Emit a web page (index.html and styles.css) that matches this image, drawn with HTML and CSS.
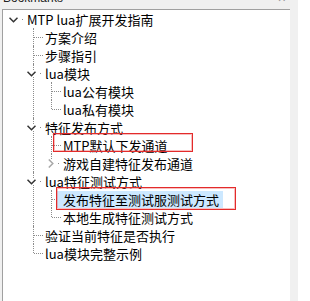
FILE: index.html
```html
<!DOCTYPE html>
<html lang="zh-CN">
<head>
    <meta charset="UTF-8">
    <title>Bookmarks</title>
    <link rel="stylesheet" href="styles.css">
</head>
<body>
    <div class="dock">
        <div class="dock-head">
            <span class="dock-title">Bookmarks</span>
            <span class="dock-close">×</span>
        </div>

        <!-- bookmark tree -->
        <div class="panel">
            <ul class="tree">
                <li class="open">
                    <div class="row"><span class="twisty"><svg width="9" height="6" viewBox="0 0 9 6"><polyline points="0.5,0.8 4.5,4.8 8.5,0.8"/></svg><i class="dot"></i></span><span class="label">MTP lua扩展开发指南</span></div>
                    <ul>
                        <li class="leaf"><div class="row"><span class="twisty"></span><span class="label">方案介绍</span></div></li>
                        <li class="leaf"><div class="row"><span class="twisty"></span><span class="label">步骤指引</span></div></li>
                        <li class="open">
                            <div class="row"><span class="twisty"><svg width="9" height="6" viewBox="0 0 9 6"><polyline points="0.5,0.8 4.5,4.8 8.5,0.8"/></svg><i class="dot"></i></span><span class="label">lua模块</span></div>
                            <ul>
                                <li class="leaf"><div class="row"><span class="twisty"></span><span class="label">lua公有模块</span></div></li>
                                <li class="leaf"><div class="row"><span class="twisty"></span><span class="label">lua私有模块</span></div></li>
                            </ul>
                        </li>
                        <li class="open">
                            <div class="row"><span class="twisty"><svg width="9" height="6" viewBox="0 0 9 6"><polyline points="0.5,0.8 4.5,4.8 8.5,0.8"/></svg><i class="dot"></i></span><span class="label">特征发布方式</span></div>
                            <ul>
                                <li class="leaf"><div class="row"><span class="twisty"></span><span class="label">MTP默认下发通道</span><span class="mark mark-a"></span></div></li>
                                <li class="closed">
                                    <div class="row"><span class="twisty"><svg class="shut" width="6" height="9" viewBox="0 0 6 9"><polyline points="0.8,0.5 4.8,4.5 0.8,8.5"/></svg><i class="dot"></i></span><span class="label">游戏自建特征发布通道</span></div>
                                </li>
                            </ul>
                        </li>
                        <li class="open">
                            <div class="row"><span class="twisty"><svg width="9" height="6" viewBox="0 0 9 6"><polyline points="0.5,0.8 4.5,4.8 8.5,0.8"/></svg><i class="dot"></i></span><span class="label">lua特征测试方式</span></div>
                            <ul>
                                <li class="leaf"><div class="row"><span class="twisty"></span><span class="label selected">发布特征至测试服测试方式</span><span class="mark mark-b"></span></div></li>
                                <li class="leaf"><div class="row"><span class="twisty"></span><span class="label">本地生成特征测试方式</span></div></li>
                            </ul>
                        </li>
                        <li class="leaf"><div class="row"><span class="twisty"></span><span class="label">验证当前特征是否执行</span></div></li>
                        <li class="leaf"><div class="row"><span class="twisty"></span><span class="label">lua模块完整示例</span></div></li>
                    </ul>
                </li>
            </ul>
        </div>
    </div>
</body>
</html>
```

FILE: styles.css
```css
body {
    margin: 0;
    background: #ffffff;
    font-family: "Noto Sans CJK SC", "Noto Sans", sans-serif;
    color: #000;
}
.dock {
    width: 298px;
    height: 301px;
    background: #f0f0f0;
    display: flex;
    flex-direction: column;
}
.dock-head {
    height: 9px;
    overflow: hidden;
    display: flex;
    justify-content: space-between;
    padding: 0 12px 0 3px;
    font-family: "Liberation Sans", sans-serif;
    font-size: 12px;
    line-height: 12px;
    color: #222;
}
.dock-title,
.dock-close {
    margin-top: -8px;
}
.dock-close {
    color: #999;
    font-size: 14px;
}
.panel {
    flex: 1;
    margin: 0 8px 0 2px;
    background: #fff;
    border-top: 1px solid #a0a0a0;
    border-left: 1px solid #a0a0a0;
}
.tree,
.tree ul {
    list-style: none;
    margin: 0;
    padding: 0;
}
.tree ul {
    padding-left: 18px;
}
.tree li {
    position: relative;
}
/* vertical guide of the parent */
.tree ul > li::before {
    content: '';
    position: absolute;
    left: 12px;
    top: 0;
    bottom: 0;
    border-left: 1px dotted #8c8c8c;
}
.tree ul > li:last-child::before {
    bottom: auto;
    height: 9px;
}
.row {
    position: relative;
    display: flex;
    align-items: center;
    height: 18px;
    font-size: 13px;
    line-height: 18px;
    white-space: nowrap;
}
.twisty {
    position: relative;
    flex: none;
    width: 24px;
    height: 18px;
}
.leaf > .row .twisty::after {
    content: '';
    position: absolute;
    left: 13px;
    top: 9px;
    width: 9px;
    border-top: 1px dotted #8c8c8c;
}
.twisty svg {
    position: absolute;
    left: 6px;
    top: 7px;
    background: #fff;
}
.twisty svg polyline {
    fill: none;
    stroke: #333;
    stroke-width: 1.5;
}
.twisty svg.shut {
    left: 9px;
    top: 5px;
}
.twisty svg.shut polyline {
    stroke: #a8a8a8;
}
.dot {
    position: absolute;
    left: 19px;
    top: 9px;
    width: 1px;
    height: 1px;
    background: #8c8c8c;
}
.label {
    position: relative;
    margin-left: -6px;
    padding: 0 4px 0 6px;
    line-height: 17px;
}
.label.selected {
    background: #cce8ff;
}
.mark {
    position: absolute;
    border: 1px solid #e32b2b;
    box-shadow: inset 0 0 0 1px rgba(235, 70, 70, 0.35);
}
.mark-a {
    left: 14px;
    top: -3px;
    width: 138px;
    height: 17px;
}
.mark-b {
    left: 17px;
    top: -3px;
    width: 178px;
    height: 21px;
}
```
